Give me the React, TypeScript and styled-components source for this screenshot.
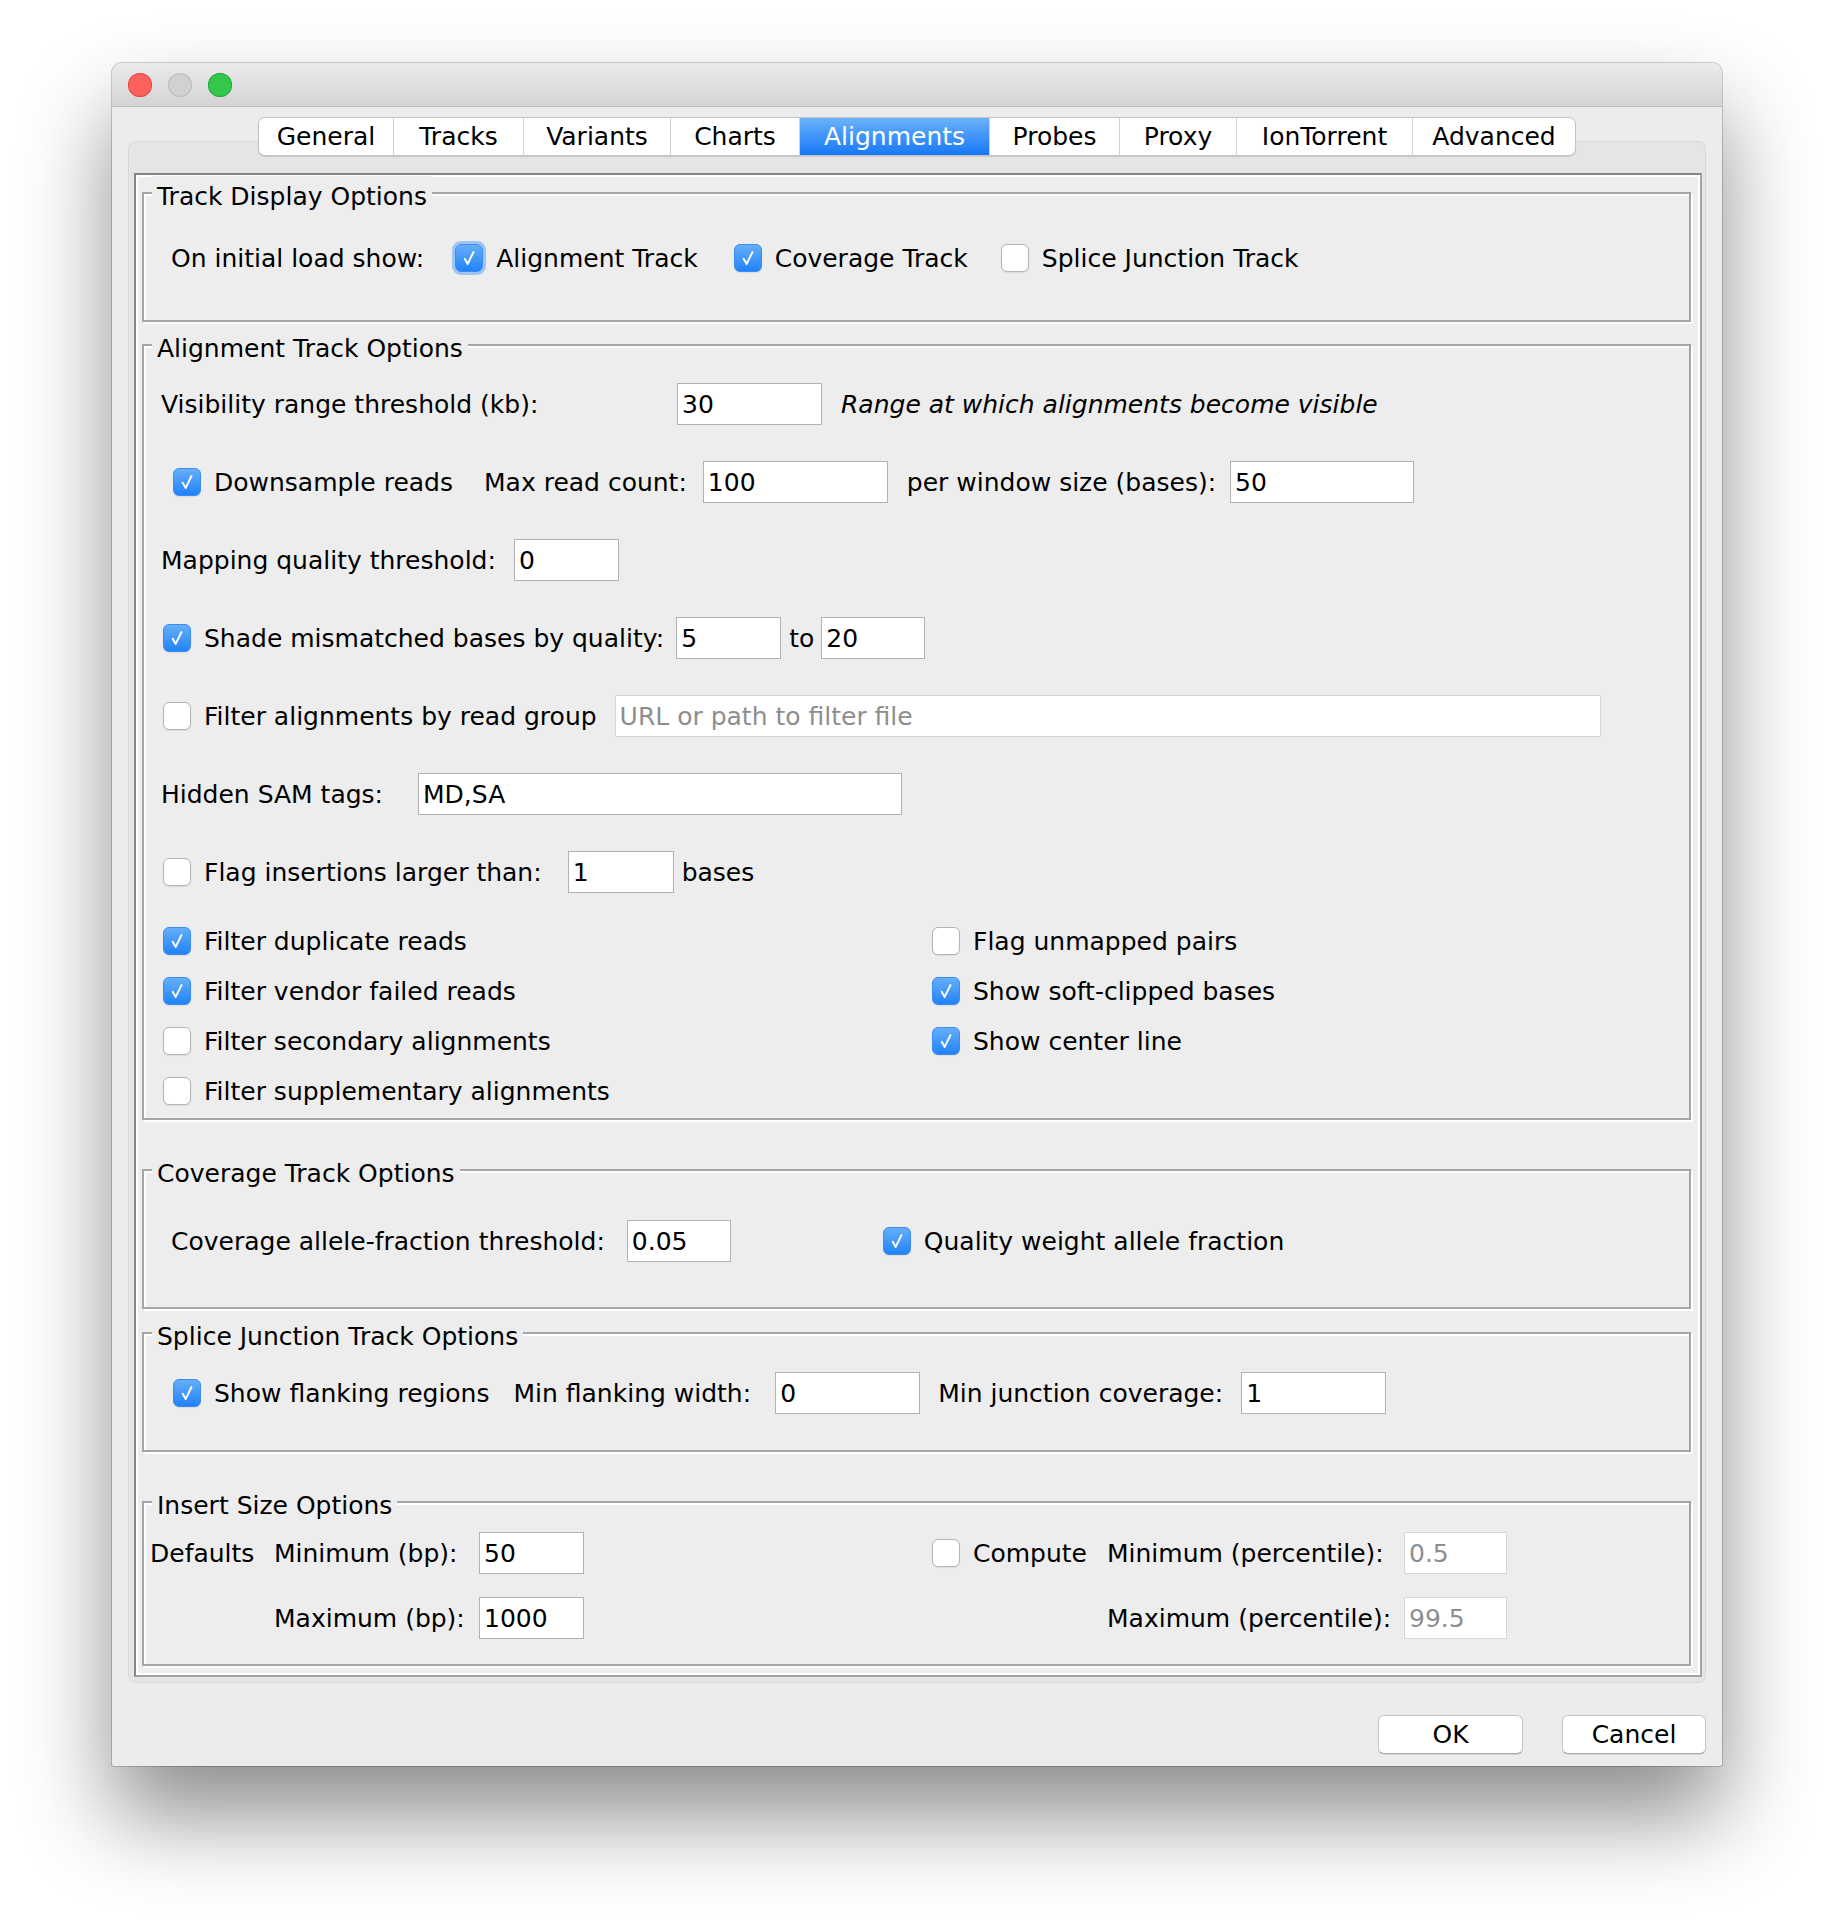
import React from "react";
import styled, { createGlobalStyle } from "styled-components";

const FONT = `"DejaVu Sans", "Liberation Sans", Verdana, sans-serif`;

const GlobalStyle = createGlobalStyle`
  html, body { margin: 0; padding: 0; background: #ffffff; }
  body { font-family: ${FONT}; font-size: 25px; color: #000; }
  * { box-sizing: border-box; }
`;

const Page = styled.div`
  padding: 63px 0 160px 112px;
`;

const Window = styled.div`
  width: 1610px;
  background: #ececec;
  border-radius: 10px 10px 2px 2px;
  box-shadow: 0 50px 90px rgba(0, 0, 0, 0.45), 0 0 0 1px rgba(0, 0, 0, 0.18);
`;

const TitleBar = styled.div`
  height: 44px;
  display: flex;
  align-items: center;
  gap: 16px;
  padding-left: 16px;
  background: linear-gradient(#ebebeb, #d4d4d4);
  border-bottom: 1px solid #c2c2c2;
  border-radius: 10px 10px 0 0;
`;

const Light = styled.span<{ $fill: string; $edge: string }>`
  width: 24px;
  height: 24px;
  border-radius: 50%;
  background: ${(p) => p.$fill};
  box-shadow: inset 0 0 0 1px ${(p) => p.$edge};
`;

const Body = styled.div`
  padding: 10px 16px 12px;
`;

const TabRow = styled.div`
  display: flex;
  justify-content: center;
  position: relative;
  z-index: 1;
  margin-bottom: -15px;
`;

const TabStrip = styled.div`
  display: flex;
  height: 39px;
  background: #fff;
  border: 1px solid #c3c3c3;
  border-radius: 7px;
  overflow: hidden;
  box-shadow: 0 1px 1px rgba(0, 0, 0, 0.12);
`;

const Tab = styled.div<{ $active?: boolean; $w: number }>`
  display: flex;
  align-items: center;
  justify-content: center;
  width: ${(p) => p.$w}px;
  border-left: 1px solid #d2d2d2;
  white-space: nowrap;
  &:first-child {
    border-left: none;
  }
  background: ${(p) => (p.$active ? "linear-gradient(#6ab2fb, #1677f5)" : "transparent")};
  color: ${(p) => (p.$active ? "#fff" : "#000")};
`;

const ContentArea = styled.div`
  background: #e5e5e5;
  border: 1px solid #d9d9d9;
  border-radius: 8px;
  padding: 31px 3px 5px 5px;
`;

const Panel = styled.div`
  display: flex;
  flex-direction: column;
  border: 2px solid;
  border-color: #858585 #a3a3a3 #a3a3a3 #858585;
  box-shadow: inset 0 0 0 2px #fff;
  background: #ededed;
  padding: 1px 9px 9px 6px;
`;

const Group = styled.fieldset<{ $mt: number }>`
  margin: ${(p) => p.$mt}px 0 0;
  padding: 0;
  min-width: 0;
  border: 2px solid #a5a5a5;
  box-shadow: inset 2px 2px 0 #fff, 2px 2px 0 #fff;
`;

const Legend = styled.legend`
  margin-left: 8px;
  padding: 8px 5px 0;
  line-height: 26px;
  background: #ededed;
`;

const GroupBody = styled.div<{ $pt: number; $pb: number }>`
  display: flex;
  flex-direction: column;
  padding: ${(p) => p.$pt}px 0 ${(p) => p.$pb}px;
`;

const FormStack = styled.div`
  display: flex;
  flex-direction: column;
  gap: 36px;
`;

const Row = styled.div<{ $pl: number }>`
  display: flex;
  align-items: center;
  height: 42px;
  padding-left: ${(p) => p.$pl}px;
`;

const Text = styled.span<{ $ml?: number; $w?: number; $italic?: boolean }>`
  margin-left: ${(p) => p.$ml ?? 0}px;
  ${(p) => (p.$w ? `width: ${p.$w}px; flex: none;` : "")}
  font-style: ${(p) => (p.$italic ? "italic" : "normal")};
  white-space: nowrap;
`;

const Field = styled.input<{ $w: number; $ml?: number; $muted?: boolean }>`
  width: ${(p) => p.$w}px;
  height: 42px;
  flex: none;
  margin: 0 0 0 ${(p) => p.$ml ?? 0}px;
  font-family: ${FONT};
  font-size: 25px;
  color: ${(p) => (p.$muted ? "#8e8e8e" : "#000")};
  background: #fff;
  border: 1px solid ${(p) => (p.$muted ? "#d6d6d6" : "#b2b2b2")};
  border-radius: 0;
  padding: 0 4px;
  outline: none;
  &::placeholder {
    color: #8e8e8e;
  }
`;

const CheckLabel = styled.label<{ $ml?: number }>`
  display: flex;
  align-items: center;
  gap: 13px;
  margin-left: ${(p) => p.$ml ?? 0}px;
  white-space: nowrap;
`;

const Box = styled.span<{ $checked?: boolean; $focus?: boolean }>`
  width: 28px;
  height: 28px;
  flex: none;
  border-radius: 6px;
  display: flex;
  align-items: center;
  justify-content: center;
  background: ${(p) => (p.$checked ? "linear-gradient(#66aff9, #2182f7)" : "#fff")};
  border: 1px solid ${(p) => (p.$checked ? "#3b8cf0" : "#b4b4b4")};
  box-shadow: ${(p) =>
    p.$focus ? "0 0 0 3px rgba(99, 160, 240, 0.55)" : "0 1px 1px rgba(0, 0, 0, 0.08)"};
`;

const CheckGrid = styled.div`
  display: grid;
  grid-template-columns: 769px auto;
  grid-auto-rows: 30px;
  row-gap: 20px;
  align-items: center;
  padding-left: 19px;
  margin-top: 33px;
`;

const InsertGrid = styled.div`
  display: grid;
  grid-template-columns: 124px 205px 105px 348px 175px 297px 103px;
  grid-auto-rows: 42px;
  row-gap: 23px;
  align-items: center;
  padding-left: 6px;
`;

const Footer = styled.div`
  display: flex;
  justify-content: flex-end;
  gap: 39px;
  padding-top: 32px;
`;

const Button = styled.button<{ $w: number }>`
  width: ${(p) => p.$w}px;
  height: 39px;
  background: #fff;
  border: 1px solid #c6c6c6;
  border-bottom-color: #a9a9a9;
  border-radius: 6px;
  font-family: ${FONT};
  font-size: 25px;
  color: #000;
  box-shadow: 0 1px 1px rgba(0, 0, 0, 0.1);
  padding: 0;
`;

function Check({
  label,
  checked,
  focus,
  ml,
}: {
  label: string;
  checked?: boolean;
  focus?: boolean;
  ml?: number;
}) {
  return (
    <CheckLabel $ml={ml}>
      <Box $checked={checked} $focus={focus}>
        {checked && (
          <svg width="28" height="28" viewBox="0 0 28 28">
            <path
              d="M9.4 14.8 L12.6 20.4 L18.8 7.6"
              fill="none"
              stroke="#fff"
              strokeWidth="2.1"
              strokeLinecap="round"
              strokeLinejoin="round"
            />
          </svg>
        )}
      </Box>
      <span>{label}</span>
    </CheckLabel>
  );
}

const TABS: { name: string; w: number }[] = [
  { name: "General", w: 134 },
  { name: "Tracks", w: 130 },
  { name: "Variants", w: 147 },
  { name: "Charts", w: 129 },
  { name: "Alignments", w: 190 },
  { name: "Probes", w: 130 },
  { name: "Proxy", w: 117 },
  { name: "IonTorrent", w: 176 },
  { name: "Advanced", w: 163 },
];

export default function App() {
  return (
    <>
      <GlobalStyle />
      <Page>
        <Window>
          <TitleBar>
            <Light $fill="#fc615d" $edge="#de4a45" />
            <Light $fill="#d1d1d1" $edge="#bcbcbc" />
            <Light $fill="#34c84a" $edge="#2aa73c" />
          </TitleBar>
          <Body>
            <TabRow>
              <TabStrip>
                {TABS.map((t) => (
                  <Tab key={t.name} $w={t.w} $active={t.name === "Alignments"}>
                    {t.name}
                  </Tab>
                ))}
              </TabStrip>
            </TabRow>
            <ContentArea>
              <Panel>
                <Group $mt={0}>
                  <Legend>Track Display Options</Legend>
                  <GroupBody $pt={27} $pb={41}>
                    <Row $pl={27}>
                      <Text>On initial load show:</Text>
                      <Check ml={31} checked focus label="Alignment Track" />
                      <Check ml={36} checked label="Coverage Track" />
                      <Check ml={33} label="Splice Junction Track" />
                    </Row>
                  </GroupBody>
                </Group>

                <Group $mt={6}>
                  <Legend>Alignment Track Options</Legend>
                  <GroupBody $pt={21} $pb={12}>
                    <FormStack>
                      <Row $pl={17}>
                        <Text $w={516}>Visibility range threshold (kb):</Text>
                        <Field $w={145} defaultValue="30" />
                        <Text $ml={19} $italic>
                          Range at which alignments become visible
                        </Text>
                      </Row>
                      <Row $pl={29}>
                        <Check checked label="Downsample reads" />
                        <Text $ml={31}>Max read count:</Text>
                        <Field $w={185} $ml={16} defaultValue="100" />
                        <Text $ml={19}>per window size (bases):</Text>
                        <Field $w={184} $ml={14} defaultValue="50" />
                      </Row>
                      <Row $pl={17}>
                        <Text>Mapping quality threshold:</Text>
                        <Field $w={105} $ml={18} defaultValue="0" />
                      </Row>
                      <Row $pl={19}>
                        <Check checked label="Shade mismatched bases by quality:" />
                        <Field $w={105} $ml={12} defaultValue="5" />
                        <Text $ml={8}>to</Text>
                        <Field $w={104} $ml={7} defaultValue="20" />
                      </Row>
                      <Row $pl={19}>
                        <Check label="Filter alignments by read group" />
                        <Field
                          $w={986}
                          $ml={18}
                          $muted
                          placeholder="URL or path to filter file"
                        />
                      </Row>
                      <Row $pl={17}>
                        <Text>Hidden SAM tags:</Text>
                        <Field $w={484} $ml={35} defaultValue="MD,SA" />
                      </Row>
                      <Row $pl={19}>
                        <Check label="Flag insertions larger than:" />
                        <Field $w={106} $ml={26} defaultValue="1" />
                        <Text $ml={8}>bases</Text>
                      </Row>
                    </FormStack>
                    <CheckGrid>
                      <Check checked label="Filter duplicate reads" />
                      <Check label="Flag unmapped pairs" />
                      <Check checked label="Filter vendor failed reads" />
                      <Check checked label="Show soft-clipped bases" />
                      <Check label="Filter secondary alignments" />
                      <Check checked label="Show center line" />
                      <Check label="Filter supplementary alignments" />
                    </CheckGrid>
                  </GroupBody>
                </Group>

                <Group $mt={33}>
                  <Legend>Coverage Track Options</Legend>
                  <GroupBody $pt={33} $pb={45}>
                    <Row $pl={27}>
                      <Text>Coverage allele-fraction threshold:</Text>
                      <Field $w={104} $ml={22} defaultValue="0.05" />
                      <Check ml={152} checked label="Quality weight allele fraction" />
                    </Row>
                  </GroupBody>
                </Group>

                <Group $mt={7}>
                  <Legend>Splice Junction Track Options</Legend>
                  <GroupBody $pt={22} $pb={36}>
                    <Row $pl={29}>
                      <Check checked label="Show flanking regions" />
                      <Text $ml={24}>Min flanking width:</Text>
                      <Field $w={145} $ml={24} defaultValue="0" />
                      <Text $ml={18}>Min junction coverage:</Text>
                      <Field $w={145} $ml={18} defaultValue="1" />
                    </Row>
                  </GroupBody>
                </Group>

                <Group $mt={33}>
                  <Legend>Insert Size Options</Legend>
                  <GroupBody $pt={13} $pb={25}>
                    <InsertGrid>
                      <Text>Defaults</Text>
                      <Text>Minimum (bp):</Text>
                      <Field $w={105} defaultValue="50" />
                      <span />
                      <Check label="Compute" />
                      <Text>Minimum (percentile):</Text>
                      <Field $w={103} $muted defaultValue="0.5" />
                      <span />
                      <Text>Maximum (bp):</Text>
                      <Field $w={105} defaultValue="1000" />
                      <span />
                      <span />
                      <Text>Maximum (percentile):</Text>
                      <Field $w={103} $muted defaultValue="99.5" />
                    </InsertGrid>
                  </GroupBody>
                </Group>
              </Panel>
            </ContentArea>
            <Footer>
              <Button $w={145}>OK</Button>
              <Button $w={144}>Cancel</Button>
            </Footer>
          </Body>
        </Window>
      </Page>
    </>
  );
}
